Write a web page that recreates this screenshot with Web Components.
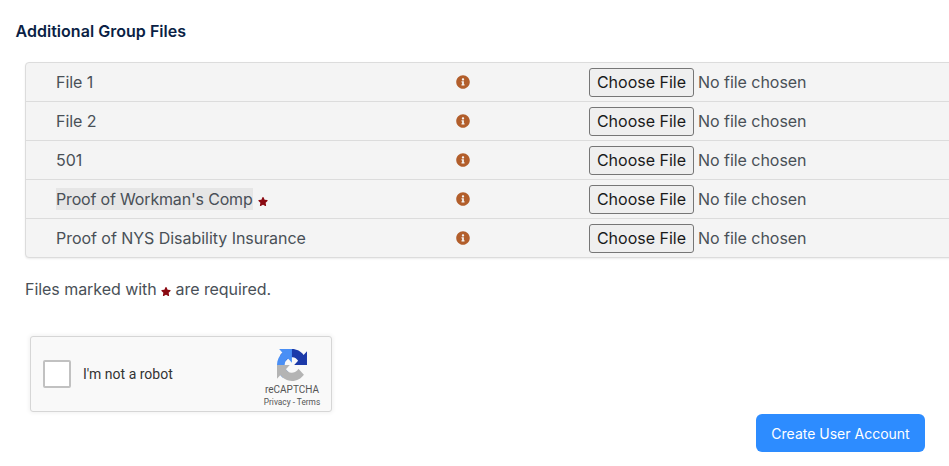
<!DOCTYPE html>
<html>
<head>
<meta charset="utf-8">
<style>
  html,body{ margin:0; background:#fff; overflow:hidden; }
  body{ width:949px; height:466px; font-family:Inter,"Liberation Sans",sans-serif; color:#495057; }
  .page{ padding:23px 0 0 0; }
</style>
</head>
<body>
<div class="page">
  <group-files title="Additional Group Files">
    <file-row label="File 1"></file-row>
    <file-row label="File 2"></file-row>
    <file-row label="501"></file-row>
    <file-row label="Proof of Workman's Comp" required highlight></file-row>
    <file-row label="Proof of NYS Disability Insurance"></file-row>
  </group-files>
  <form-footer>
    <re-captcha></re-captcha>
    <blue-button slot="action">Create User Account</blue-button>
  </form-footer>
</div>

<script>
(function(){
  const INFO = '<svg viewBox="0 0 512 512" width="14" height="14" style="display:block"><path fill="#b25e2b" d="M256 8C119.043 8 8 119.083 8 256c0 136.997 111.043 248 248 248s248-111.003 248-248C504 119.083 392.957 8 256 8zm0 110c23.196 0 42 18.804 42 42s-18.804 42-42 42-42-18.804-42-42 18.804-42 42-42zm56 254c0 6.627-5.373 12-12 12h-88c-6.627 0-12-5.373-12-12v-24c0-6.627 5.373-12 12-12h12v-64h-12c-6.627 0-12-5.373-12-12v-24c0-6.627 5.373-12 12-12h64c6.627 0 12 5.373 12 12v100h12c6.627 0 12 5.373 12 12v24z"/></svg>';
  const STAR = '<svg viewBox="0 0 576 512" width="10" height="9" style="display:inline-block"><path fill="#8b0a12" d="M259.3 17.8L194 150.2 47.9 171.5c-26.2 3.8-36.7 36.1-17.7 54.6l105.7 103-25 145.5c-4.5 26.3 23.2 46 46.4 33.7L288 439.6l130.7 68.7c23.2 12.2 50.9-7.4 46.4-33.7l-25-145.5 105.7-103c19-18.5 8.5-50.8-17.7-54.6L382 150.2 316.7 17.8c-11.7-23.6-45.6-23.9-57.4 0z"/></svg>';

  class GroupFiles extends HTMLElement {
    constructor(){
      super();
      this.root = this.attachShadow({mode:'open'});
      this.root.innerHTML = `
        <style>
          :host{ display:block; }
          h3{ margin:0 0 22px 15.5px; font-size:16px; line-height:17px; font-weight:600; color:#0b1f45; letter-spacing:.03px; }
          .list{
            margin-left:25px; width:960px; box-sizing:border-box;
            background:#f4f4f4; border:1px solid #dcdcdc; border-radius:4px;
            box-shadow:0 1px 2px rgba(0,0,0,.08);
          }
          p{ margin:22px 0 0 25px; font-size:16px; line-height:19px; color:#495057; letter-spacing:-.05px; }
          p svg{ vertical-align:-1px; }
        </style>
        <h3></h3>
        <div class="list"><slot></slot></div>
        <p>Files marked with ${STAR} are required.</p>`;
      this.root.querySelector('h3').textContent = this.getAttribute('title');
    }
  }

  class FileRow extends HTMLElement {
    constructor(){
      super();
      this.root = this.attachShadow({mode:'open'});
      this.root.innerHTML = `
        <style>
          :host{
            display:grid; grid-template-columns:400px 133px 1fr; align-items:center;
            height:38px; padding-left:30px; font-size:16px; color:#495057;
            border-top:1px solid #dcdcdc;
          }
          :host(:first-child){ border-top:0; }
          .label mark{ background:transparent; color:inherit; padding:1px 0; letter-spacing:-.04px; }
          :host([highlight]) .label mark{ background:#e6e6e6; letter-spacing:-.17px; }
          .label svg{ vertical-align:-1px; margin-left:5px; }
          .file{ display:flex; align-items:center; gap:4px; }
          .file span{ letter-spacing:-.04px; }
          button{
            width:105px; height:29px; padding:0; box-sizing:border-box;
            font:400 16px Inter,"Liberation Sans",sans-serif; color:#1a1a1a;
            background:#efefef; border:1px solid #767676; border-radius:3px;
          }
        </style>
        <span class="label"><mark></mark></span>
        <span class="info">${INFO}</span>
        <span class="file"><button type="button">Choose File</button><span>No file chosen</span></span>`;
      this.root.querySelector('mark').textContent = this.getAttribute('label');
      if (this.hasAttribute('required')) {
        this.root.querySelector('.label').insertAdjacentHTML('beforeend', STAR);
      }
    }
  }

  class FormFooter extends HTMLElement {
    constructor(){
      super();
      this.root = this.attachShadow({mode:'open'});
      this.root.innerHTML = `
        <style>
          :host{ display:block; padding:37px 24px 0 30px; }
          .action{ display:flex; justify-content:flex-end; margin-top:2px; }
        </style>
        <slot></slot>
        <div class="action"><slot name="action"></slot></div>`;
    }
  }

  class ReCaptcha extends HTMLElement {
    constructor(){
      super();
      this.root = this.attachShadow({mode:'open'});
      this.root.innerHTML = `
        <style>
          :host{
            display:flex; align-items:center; width:302px; height:76px; box-sizing:border-box;
            background:#f9f9f9; border:1px solid #d6d6d6; border-radius:3px;
            box-shadow:0 0 4px 1px rgba(0,0,0,.06);
            font-family:Roboto,"Liberation Sans",sans-serif; color:#333;
          }
          .box{ width:28px; height:28px; box-sizing:border-box; margin-left:12px; background:#fff; border:2px solid #c1c1c1; border-radius:2px; }
          .text{ margin-left:12px; font-size:14px; flex:1; }
          .brand{ width:70px; display:flex; flex-direction:column; align-items:center; margin-right:4px; color:#555; padding-top:8px; }
          .brand svg{ display:block; }
          .name{ font-size:10px; line-height:12px; margin-top:3px; }
          .links{ font-size:8.3px; line-height:11px; margin-top:1px; white-space:nowrap; }
        </style>
        <div class="box"></div>
        <div class="text">I'm not a robot</div>
        <div class="brand">
          <svg viewBox="0 0 64 64" width="30" height="32" preserveAspectRatio="none">
            <path fill="#1c3aa9" d="M64 31.955l-.033-1.37V4.687l-7.16 7.16C50.948 4.674 42.033.093 32.05.093c-10.4 0-19.622 4.96-25.458 12.64l11.736 11.86a15.55 15.55 0 0 1 4.754-5.334c2.05-1.6 4.952-2.906 8.968-2.906.485 0 .86.057 1.135.163 4.976.393 9.29 3.14 11.83 7.124l-8.307 8.307L64 31.953"/>
            <path fill="#4a8ff5" d="M31.862.094l-1.37.033H4.594l7.16 7.16C4.58 13.147 0 22.06 0 32.046c0 10.4 4.96 19.622 12.64 25.458L24.5 45.768a15.55 15.55 0 0 1-5.334-4.754c-1.6-2.05-2.906-4.952-2.906-8.968 0-.485.057-.86.163-1.135.393-4.976 3.14-9.29 7.124-11.83l8.307 8.307L31.86.095"/>
            <path fill="#b4b4b4" d="M.001 32.045l.033 1.37v25.898l7.16-7.16c5.86 7.173 14.774 11.754 24.76 11.754 10.4 0 19.622-4.96 25.458-12.64l-11.736-11.86a15.55 15.55 0 0 1-4.754 5.334c-2.05 1.6-4.952 2.906-8.968 2.906-.485 0-.86-.057-1.135-.163-4.976-.393-9.29-3.14-11.83-7.124l8.307-8.307c-10.64.07-22.66.085-27.295-.002"/>
          </svg>
          <div class="name">reCAPTCHA</div>
          <div class="links">Privacy - Terms</div>
        </div>`;
    }
  }

  class BlueButton extends HTMLElement {
    constructor(){
      super();
      this.root = this.attachShadow({mode:'open'});
      this.root.innerHTML = `
        <style>
          :host{ display:inline-block; }
          button{
            display:block; width:169px; height:38px; padding:0; border:0; border-radius:6px;
            background:#2d8cff; color:#fff; font:400 14px Inter,"Liberation Sans",sans-serif;
          }
        </style>
        <button type="button"><slot></slot></button>`;
    }
  }

  customElements.define('group-files', GroupFiles);
  customElements.define('file-row', FileRow);
  customElements.define('form-footer', FormFooter);
  customElements.define('re-captcha', ReCaptcha);
  customElements.define('blue-button', BlueButton);
})();
</script>
</body>
</html>
